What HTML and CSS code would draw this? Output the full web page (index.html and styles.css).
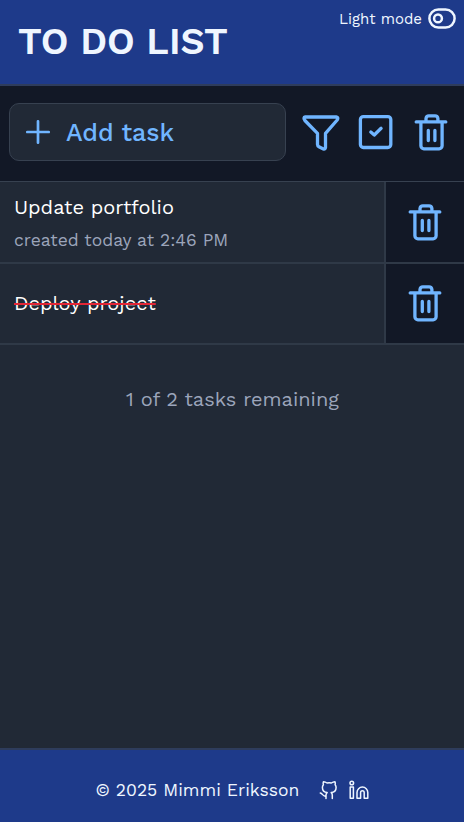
FILE: index.html
```html
<!DOCTYPE html>
<html lang="en">
<head>
<meta charset="utf-8">
<meta name="viewport" content="width=device-width, initial-scale=1">
<title>To do list</title>
<link rel="stylesheet" href="styles.css">
</head>
<body>
<svg width="0" height="0" class="sprite" aria-hidden="true">
  <symbol id="trash" viewBox="0 0 40 44">
    <path d="M5.2 11.9H34.8M9.9 12V35.8a3 3 0 0 0 3 3H28.1a3 3 0 0 0 3-3V12M15 11.5V8.4a2.9 2.9 0 0 1 2.9-2.5H24a2.9 2.9 0 0 1 2.9 2.5V11.5M17.3 20.5V30.6M23.9 20.5V30.6"/>
  </symbol>
</svg>
<header class="header">
  <h1 class="title">TO DO LIST</h1>
  <button class="mode"><span class="mode-label">Light mode</span>
    <svg class="toggle" width="28" height="21" viewBox="0 0 28 21"><rect x="1.4" y="1.4" width="25.2" height="18" rx="9"/><circle cx="10" cy="10.4" r="3.9"/></svg>
  </button>
</header>
<main class="main">
  <div class="toolbar">
    <button class="add"><svg class="plus" width="24" height="24" viewBox="0 0 24 24"><path d="M1.3 12H22.7M12 1.3V22.7"/></svg><span class="add-label">Add task</span></button>
    <div class="actions">
      <svg class="icon" viewBox="0 0 40 44"><path d="M4.2 7H35.2Q37.9 7.4 36.2 10L24.5 23.4V37.6Q24.2 39.6 22.4 38.9L17.9 36.7Q16.5 36 16.5 34.6V23.4L3.9 10.5Q1.9 7.3 4.2 7Z"/></svg>
      <svg class="icon" viewBox="0 0 40 44"><rect x="4.4" y="6.6" width="30.4" height="30.9" rx="3"/><path d="M14.8 22L18.3 25L25.1 18.3"/></svg>
      <svg class="icon"><use href="#trash"/></svg>
    </div>
  </div>
  <ul class="tasks">
    <li class="task">
      <div class="task-text"><div class="name">Update portfolio</div><div class="date">created today at 2:46 PM</div></div>
      <button class="delete"><svg class="icon"><use href="#trash"/></svg></button>
    </li>
    <li class="task">
      <div class="task-text"><div class="name done">Deploy project</div></div>
      <button class="delete"><svg class="icon"><use href="#trash"/></svg></button>
    </li>
  </ul>
  <p class="remaining">1 of 2 tasks remaining</p>
</main>
<footer class="footer">
  <span class="copyright">© 2025 Mimmi Eriksson</span>
  <svg class="social" width="20" height="20" viewBox="0 0 20 20"><path d="M7 18.5V15.2Q7 13.5 8.2 12.6C4.8 12.4 3.4 10.6 3.4 7.6Q3.4 6 4.4 4.8Q3.8 3 4.5 1.7Q6.4 1.8 8 3Q10.2 2.4 12.4 3Q14.1 1.8 16 1.7Q16.6 3.2 16.1 4.8Q17.1 6 17.1 7.6C17.1 10.6 15.6 12.4 12.2 12.6Q13.3 13.5 13.3 15.2V18.5M7 16C3.8 17 3.8 13.3 1.3 13"/></svg>
  <svg class="social linkedin" width="20" height="20" viewBox="0 0 20 20"><circle cx="2.8" cy="3" r="1.8"/><path d="M1.2 7H4.4V18.3H1.2ZM8 18.3V12.5a5.4 5.4 0 0 1 10.8 0V18.3H15.2V12.5a1.8 1.8 0 0 0-3.6 0V18.3Z"/></svg>
</footer>
</body>
</html>
```
FILE: styles.css
```css
* { box-sizing: border-box; }
body {
  margin: 0;
  min-height: 100vh;
  display: flex;
  flex-direction: column;
  background: #212936;
  color: #fff;
  font-family: "Work Sans", Inter, "Open Sans", sans-serif;
}
button { background: none; border: 0; padding: 0; font: inherit; color: inherit; }
.sprite { position: absolute; }
svg { fill: none; stroke: currentColor; stroke-linecap: round; stroke-linejoin: round; flex: none; }
.header {
  height: 86px;
  display: flex;
  justify-content: space-between;
  align-items: flex-start;
  padding: 8px 8px 0 18px;
  background: #1e3a8a;
  border-bottom: 2px solid #2e3c5c;
  color: #eff6ff;
}
.title { margin: 12px 0 0; font-size: 37.5px; line-height: 42px; font-weight: 600; white-space: nowrap; }
.mode { display: flex; align-items: center; gap: 6px; height: 21px; }
.mode-label { font-size: 15px; line-height: 21px; padding-top: 1px; }
.toggle { stroke-width: 2.5; }
.toolbar {
  height: 96px;
  display: flex;
  align-items: center;
  padding: 0 13px 3px 9px;
  background: #121826;
  border-bottom: 1px solid #374150;
  color: #70b5ff;
}
.add {
  width: 277px;
  height: 58px;
  display: flex;
  align-items: center;
  gap: 16px;
  padding-left: 16px;
  background: #212936;
  border: 1px solid #374150;
  border-radius: 10px;
}
.plus { stroke-width: 2.7; }
.add-label { font-size: 25px; font-weight: 500; }
.actions { display: flex; gap: 15px; margin: -1px 0 0 14.5px; }
.icon { width: 40px; height: 44px; stroke-width: 3.3; }
.tasks { list-style: none; margin: 0; padding: 0; }
.task { display: flex; height: 81.5px; }
.task-text {
  width: 386px;
  display: flex;
  flex-direction: column;
  justify-content: center;
  padding-left: 14px;
  border-right: 2px solid #2f3947;
  border-bottom: 2px solid #2f3947;
}
.name { padding-top: 1px; font-size: 20px; line-height: 28px; align-self: flex-start; }
.date { font-size: 17.5px; line-height: 24px; margin-top: 7px; color: #9ca5bb; align-self: flex-start; }
.done { padding: 0 0 1px; text-decoration: line-through #e32636 1.5px; }
.delete {
  flex: 1;
  display: flex;
  align-items: center;
  justify-content: center;
  background: #121826;
  border-bottom: 2px solid #2f3947;
  color: #70b5ff;
}
.remaining { margin: 40px 0 0; padding-left: 1px; text-align: center; font-size: 20px; line-height: 28px; color: #9ca5bb; }
.footer {
  margin-top: auto;
  height: 74px;
  display: flex;
  align-items: center;
  padding: 8px 0 0 95.5px;
  background: #1e3a8a;
  border-top: 2px solid #2e3c5c;
  color: #eff6ff;
}
.copyright { width: 223.5px; font-size: 17.5px; white-space: nowrap; }
.social { stroke-width: 1.5; }
.linkedin { margin-left: 10px; }
```
